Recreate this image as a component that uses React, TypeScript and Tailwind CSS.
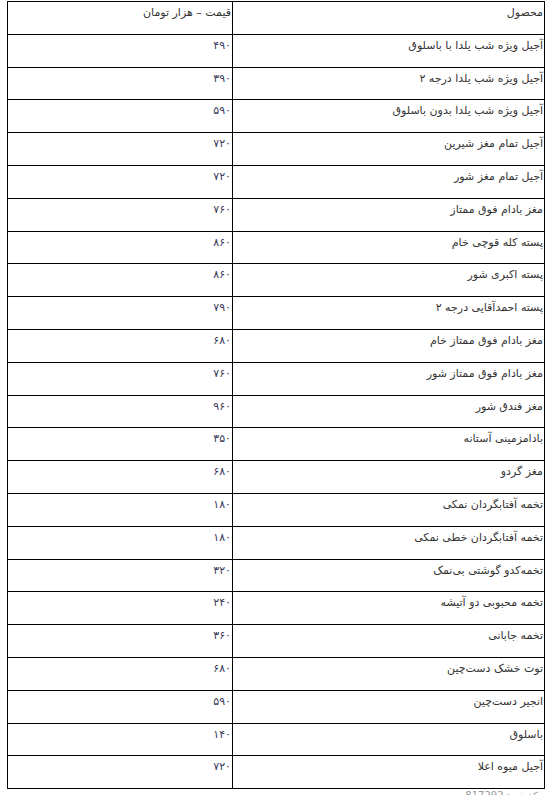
const rows: [string, string][] = [
  ['آجیل ویژه شب یلدا با باسلوق', '۴۹۰'],
  ['آجیل ویژه شب یلدا درجه ۲', '۳۹۰'],
  ['آجیل ویژه شب یلدا بدون باسلوق', '۵۹۰'],
  ['آجیل تمام مغز شیرین', '۷۲۰'],
  ['آجیل تمام مغز شور', '۷۲۰'],
  ['مغز بادام فوق ممتاز', '۷۶۰'],
  ['پسته کله قوچی خام', '۸۶۰'],
  ['پسته اکبری شور', '۸۶۰'],
  ['پسته احمدآقایی درجه ۲', '۷۹۰'],
  ['مغز بادام فوق ممتاز خام', '۶۸۰'],
  ['مغز بادام فوق ممتاز شور', '۷۶۰'],
  ['مغز فندق شور', '۹۶۰'],
  ['بادامزمینی آستانه', '۳۵۰'],
  ['مغز گردو', '۶۸۰'],
  ['تخمه آفتابگردان نمکی', '۱۸۰'],
  ['تخمه آفتابگردان خطی نمکی', '۱۸۰'],
  ['تخمه‌کدو گوشتی بی‌نمک', '۳۲۰'],
  ['تخمه محبوبی دو آتیشه', '۲۴۰'],
  ['تخمه جابانی', '۳۶۰'],
  ['توت خشک دست‌چین', '۶۸۰'],
  ['انجیر دست‌چین', '۵۹۰'],
  ['باسلوق', '۱۴۰'],
  ['آجیل میوه اعلا', '۷۲۰'],
];

const App = () => {
  return (
    <div className="bg-white min-h-[795px] pl-[7px] pr-[8px] pt-[1px] font-['DejaVu_Sans',sans-serif] text-[11px] leading-[16px] text-[#333]">
      <table dir="rtl" className="w-[538px] border-collapse border border-black">
        <tbody>
          <tr className="h-[32.8px]">
            <td className="w-[312px] border border-black align-top pt-[3px] pr-px">محصول</td>
            <td className="border border-black align-top pt-[3px] pr-px">قیمت – هزار تومان</td>
          </tr>
          {rows.map(([name, price]) => (
            <tr key={name} className="h-[32.8px]">
              <td className="w-[312px] border border-black align-top pt-[3px] pr-px">{name}</td>
              <td className="border border-black align-top pt-[3px] pr-px text-[#3a3a5a]">{price}</td>
            </tr>
          ))}
        </tbody>
      </table>
      <div dir="rtl" className="pr-[7px] text-[10px] leading-[12px] text-[#999] mt-px">
        کد خبر: 817292
      </div>
    </div>
  );
};

export default App;
